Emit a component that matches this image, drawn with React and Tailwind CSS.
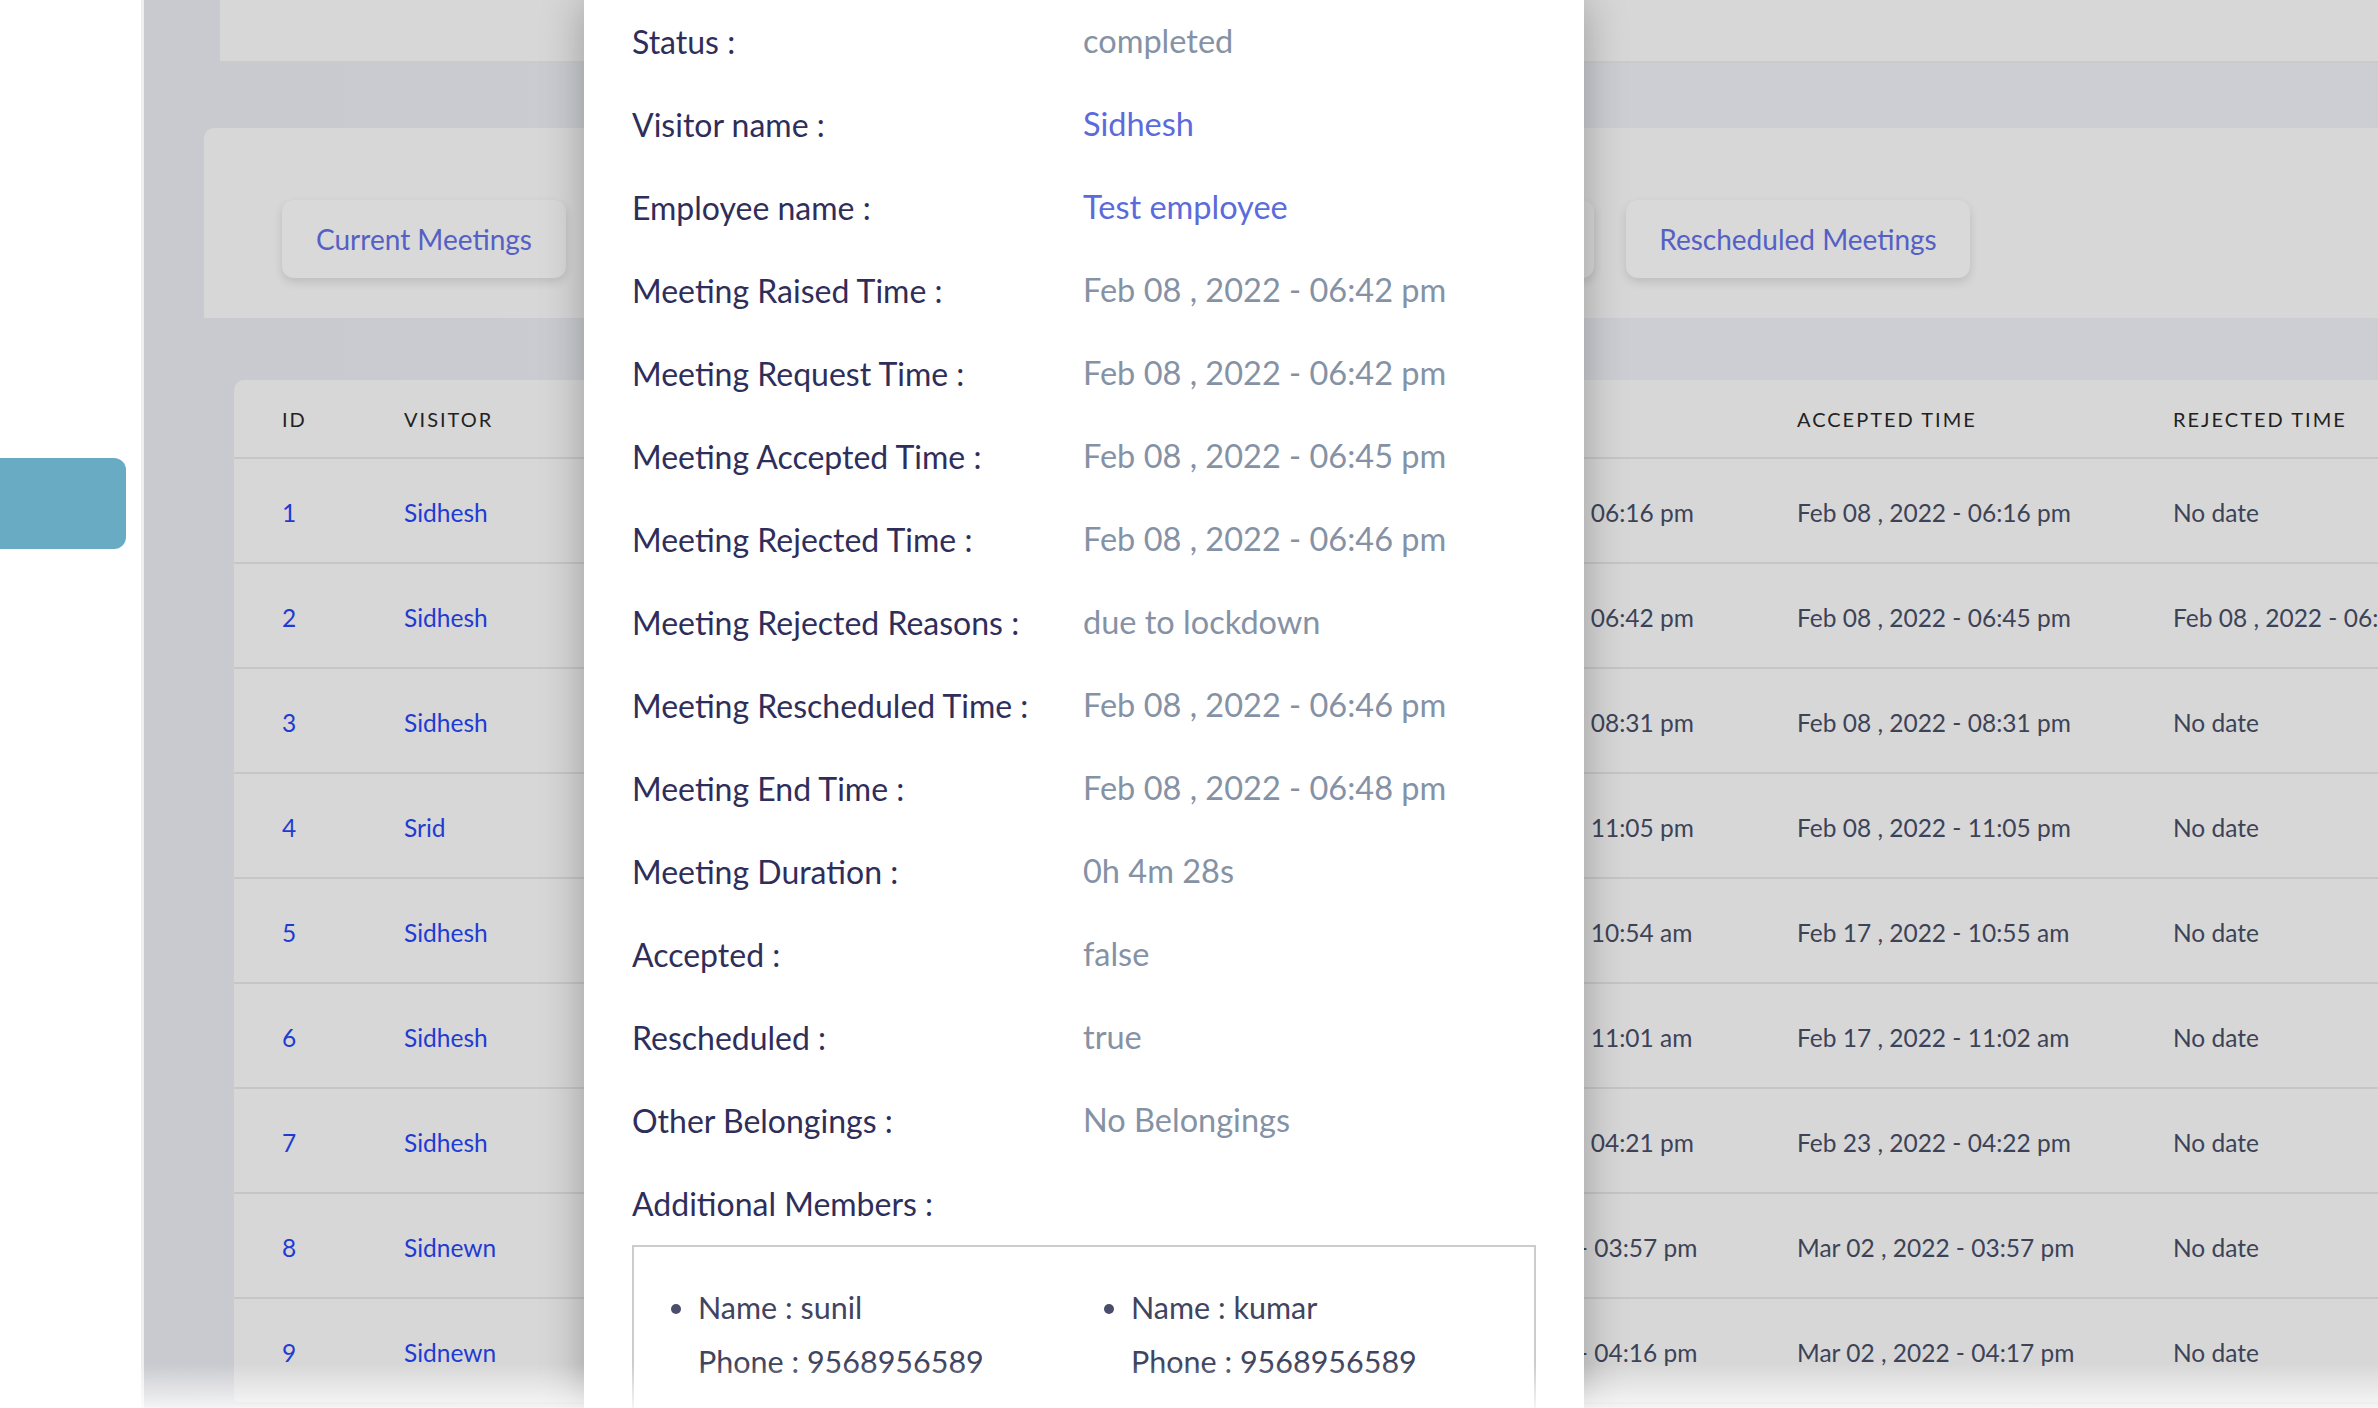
const rows = [
  { id: 1, visitor: 'Sidhesh', req: 'Feb 08 , 2022 - 06:16 pm', acc: 'Feb 08 , 2022 - 06:16 pm', rej: 'No date' },
  { id: 2, visitor: 'Sidhesh', req: 'Feb 08 , 2022 - 06:42 pm', acc: 'Feb 08 , 2022 - 06:45 pm', rej: 'Feb 08 , 2022 - 06:46 pm' },
  { id: 3, visitor: 'Sidhesh', req: 'Feb 08 , 2022 - 08:31 pm', acc: 'Feb 08 , 2022 - 08:31 pm', rej: 'No date' },
  { id: 4, visitor: 'Srid', req: 'Feb 08 , 2022 - 11:05 pm', acc: 'Feb 08 , 2022 - 11:05 pm', rej: 'No date' },
  { id: 5, visitor: 'Sidhesh', req: 'Feb 17 , 2022 - 10:54 am', acc: 'Feb 17 , 2022 - 10:55 am', rej: 'No date' },
  { id: 6, visitor: 'Sidhesh', req: 'Feb 17 , 2022 - 11:01 am', acc: 'Feb 17 , 2022 - 11:02 am', rej: 'No date' },
  { id: 7, visitor: 'Sidhesh', req: 'Feb 23 , 2022 - 04:21 pm', acc: 'Feb 23 , 2022 - 04:22 pm', rej: 'No date' },
  { id: 8, visitor: 'Sidnewn', req: 'Mar 02 , 2022 - 03:57 pm', acc: 'Mar 02 , 2022 - 03:57 pm', rej: 'No date' },
  { id: 9, visitor: 'Sidnewn', req: 'Mar 02 , 2022 - 04:16 pm', acc: 'Mar 02 , 2022 - 04:17 pm', rej: 'No date' },
]

const details = [
  ['Status :', 'completed', 'gray'],
  ['Visitor name :', 'Sidhesh', 'blue'],
  ['Employee name :', 'Test employee', 'blue'],
  ['Meeting Raised Time :', 'Feb 08 , 2022 - 06:42 pm', 'gray'],
  ['Meeting Request Time :', 'Feb 08 , 2022 - 06:42 pm', 'gray'],
  ['Meeting Accepted Time :', 'Feb 08 , 2022 - 06:45 pm', 'gray'],
  ['Meeting Rejected Time :', 'Feb 08 , 2022 - 06:46 pm', 'gray'],
  ['Meeting Rejected Reasons :', 'due to lockdown', 'gray'],
  ['Meeting Rescheduled Time :', 'Feb 08 , 2022 - 06:46 pm', 'gray'],
  ['Meeting End Time :', 'Feb 08 , 2022 - 06:48 pm', 'gray'],
  ['Meeting Duration :', '0h 4m 28s', 'gray'],
  ['Accepted :', 'false', 'gray'],
  ['Rescheduled :', 'true', 'gray'],
  ['Other Belongings :', 'No Belongings', 'gray'],
]

const members = [
  { name: 'sunil', phone: '9568956589' },
  { name: 'kumar', phone: '9568956589' },
]

// columns under the modal are left empty, only the request column peeks out
const cols = 'grid grid-cols-[122px_1016px_377px_376px_1fr] pl-[48px]'

function TabButton({ children, className }) {
  return (
    <button
      className={`h-[78px] shrink-0 rounded-[12px] bg-[#d9d9da] text-[28px] text-[#5560c4] shadow-[0_4px_10px_rgba(0,0,0,0.12)] ${className}`}
    >
      {children}
    </button>
  )
}

export default function App() {
  return (
    <div className="relative flex h-[1408px] w-[2378px] overflow-hidden font-[Lato,sans-serif]">
      {/* sidebar */}
      <aside className="w-[144px] shrink-0 border-r-[3px] border-[#eeeeee] bg-white pt-[458px]">
        <div className="h-[91px] w-[126px] rounded-r-[12px] bg-[#69abc2]" />
      </aside>

      {/* dimmed page */}
      <main className="flex-1 bg-gradient-to-r from-[#c9cacf] via-[#cdced3] to-[#cdced3]">
        <div className="ml-[76px] h-[63px] border-b-2 border-[#cbcbcd] bg-[#d7d7d8]" />

        <div className="ml-[60px] mt-[65px] flex h-[190px] gap-[32px] rounded-tl-[10px] bg-[#d7d7d8] pl-[78px] pt-[72px]">
          <TabButton className="w-[284px]">Current Meetings</TabButton>
          <TabButton className="w-[310px]" />
          <TabButton className="w-[311px]" />
          <TabButton className="w-[311px]" />
          <TabButton className="w-[344px]">Rescheduled Meetings</TabButton>
        </div>

        <div className="ml-[90px] mt-[62px] rounded-tl-[10px] bg-[#d7d7d7] whitespace-nowrap">
          <div className={`${cols} h-[79px] items-center border-b-2 border-[#c6c6c8] text-[20px] tracking-[0.1em] text-[#222222]`}>
            <div>ID</div>
            <div>VISITOR</div>
            <div />
            <div>ACCEPTED TIME</div>
            <div>REJECTED TIME</div>
          </div>
          {rows.map((r) => (
            <div
              key={r.id}
              className={`${cols} h-[105px] items-center border-b-2 border-[#c6c6c8] pt-[5px] text-[24.5px] text-[#3d4357]`}
            >
              <div className="text-[#1f3bd3]">{r.id}</div>
              <div className="text-[#1f3bd3]">{r.visitor}</div>
              <div>{r.req}</div>
              <div>{r.acc}</div>
              <div>{r.rej}</div>
            </div>
          ))}
        </div>
      </main>

      {/* modal */}
      <section className="absolute left-[584px] top-0 h-[1460px] w-[1000px] bg-white px-[48px] shadow-[0_0_40px_rgba(0,0,0,0.28)]">
        {details.map(([label, value, tone]) => (
          <div key={label} className="flex h-[83px] items-center whitespace-nowrap">
            <div className="w-[451px] shrink-0 text-[32px] text-[#2f2e5a]">{label}</div>
            <div className={`text-[32.5px] ${tone === 'blue' ? 'text-[#5b6bdc]' : 'text-[#8592a5]'}`}>{value}</div>
          </div>
        ))}
        <div className="flex h-[83px] items-center text-[32px] text-[#2f2e5a]">Additional Members :</div>

        <div className="h-[260px] border-2 border-[#cccccc] pl-[64px] pt-[33px]">
          <ul className="flex list-disc text-[30.5px] text-[#41445f] marker:text-[#4a4e6b]">
            {members.map((m) => (
              <li key={m.name} className="w-[433px] shrink-0">
                <div className="leading-[54px]">Name : {m.name}</div>
                <div className="leading-[54px]">Phone : {m.phone}</div>
              </li>
            ))}
          </ul>
        </div>
      </section>

      {/* bottom fade */}
      <div className="pointer-events-none absolute bottom-0 left-0 h-[44px] w-full bg-gradient-to-t from-white/80 to-transparent" />
    </div>
  )
}
